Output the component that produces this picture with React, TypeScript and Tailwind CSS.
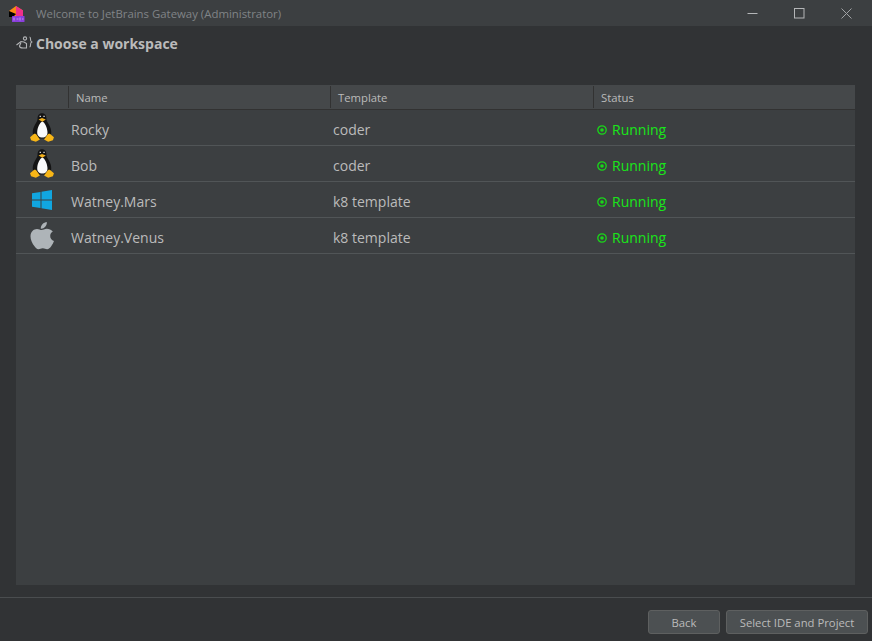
import React from "react";

function Tux() {
  return (
    <svg width="24" height="29" viewBox="60 25 70 85">
      <path d="M95 26c-9 0-13 7-13 15 0 8-4 12-8 19-4 7-7 16-6 25l7 15h40l7-15c1-9-2-18-6-25-4-7-8-11-8-19 0-8-4-15-13-15z" fill="#141414" />
      <path d="M96 50c-7 3-14 16-15 30-1 11 6 17 15 17s16-6 15-17c-1-14-8-27-15-30z" fill="#fafafa" />
      <path d="M85 44 95 40l11 4-10 7z" fill="#f5b21c" />
      <path d="M88 33h4v4h-4zM99 33h4v4h-4z" fill="#d8d8d8" />
      <path d="M60 96l12-10c4-1 6 1 8 4l9 13-12 6-14-4-3-9z" fill="#f8b617" />
      <path d="M130 96l-12-10c-4-1-6 1-8 4l-9 13 12 6 14-4 3-9z" fill="#f8b617" />
    </svg>
  );
}

function Windows() {
  return (
    <svg width="20" height="20" viewBox="1 1 20 20" fill="#11a6e0">
      <path d="M1 4.200 9.500 3v7.500H1zM10.500 2.800 21 1v9.500H10.500zM1 11.500h8.500V19L1 17.800zM10.500 11.500H21V21l-10.500-1.800z" />
    </svg>
  );
}

function Apple() {
  return (
    <svg width="24" height="28" viewBox="1 1 24 29" preserveAspectRatio="none" fill="#aeb4b8">
      <path d="M17.800 1c.2 2-.5 3.700-1.600 5-1.100 1.300-2.800 2.200-4.400 2-.2-1.800.6-3.600 1.600-4.700C14.600 2 16.400 1.100 17.800 1z" />
      <path d="M24 10.500c-1.800 1.200-2.800 2.800-2.800 4.900 0 2.500 1.400 4.300 3.800 5.200-.7 2-1.600 3.800-2.800 5.500-1.200 1.700-2.400 3-4.100 3-1.700 0-2.300-1-4.300-1s-2.700 1-4.300 1c-1.700 0-2.900-1.500-4.200-3.300C3.300 23.300 1.500 19.500 1.500 16c0-5 3.200-7.800 6.500-7.800 1.900 0 3.300 1.200 4.700 1.200 1.300 0 3-1.300 5.100-1.300 2.300 0 4.400 1 5.700 2.400z" />
    </svg>
  );
}

const rows = [
  { name: "Rocky", template: "coder", icon: <Tux /> },
  { name: "Bob", template: "coder", icon: <Tux /> },
  { name: "Watney.Mars", template: "k8 template", icon: <Windows /> },
  { name: "Watney.Venus", template: "k8 template", icon: <Apple /> },
];

export default function App() {
  return (
    <div className="w-[872px] h-[641px] flex flex-col bg-[#313335] font-['Open_Sans','Noto_Sans',sans-serif] overflow-hidden">
      {/* Title bar */}
      <div className="h-[26px] shrink-0 bg-[#3c3f41] flex items-center">
        <div className="w-[36px] pl-[9px] flex items-center">
          <svg width="16" height="17" viewBox="0 0 16 17">
            <path d="M0 6 7 1l7 4.500V12H0z" fill="#f98a12" />
            <path d="M7 1l7 4.500V12H7z" fill="#f0308c" />
            <path d="M0 6l7 3-3 3H0z" fill="#000" />
            <rect x="3" y="11" width="12.500" height="6" rx="0.500" fill="#8a3fdc" />
            <path d="M5 12.500v3M7.500 14h2M11 12.500v3M13 14h1.500" stroke="#d9c2f5" strokeWidth="0.700" />
          </svg>
        </div>
        <span className="flex-1 text-[11.4px] text-[#808487] pt-px">Welcome to JetBrains Gateway (Administrator)</span>
        <div className="flex items-center pr-[2px]">
          <button className="w-[47px] h-[26px] flex items-center justify-center">
            <svg width="11" height="11" viewBox="0 0 11 11"><path d="M0.500 5.500h10" stroke="#b4b6b8" /></svg>
          </button>
          <button className="w-[47px] h-[26px] flex items-center justify-center">
            <svg width="11" height="11" viewBox="0 0 11 11"><rect x="0.500" y="0.500" width="9.500" height="9.500" fill="none" stroke="#b4b6b8" /></svg>
          </button>
          <button className="w-[47px] h-[26px] flex items-center justify-center">
            <svg width="11" height="11" viewBox="0 0 11 11"><path d="M0.500 0.500l10 10M10.500 0.500l-10 10" stroke="#a0a2a4" /></svg>
          </button>
        </div>
      </div>

      {/* Heading */}
      <div className="h-[59px] shrink-0 pl-[16px] pt-[5px]">
        <div className="flex items-center h-[24px] gap-[3px]">
          <svg width="17" height="16" viewBox="0 0 17 16" fill="none" stroke="#b3b5b7" strokeWidth="1.100">
            <path d="M0.500 10 5 6.500l3 .5" />
            <path d="M5 7.500 3.500 11c0 1.500 1.500 2 3.500 2h3.500V8.500L8 7" />
            <circle cx="9" cy="3.500" r="1.600" />
            <path d="M13.500 2c1 0 1 .6 1 2 0 1.500.2 2.500 1.200 3-1 .5-1.200 1.500-1.200 3 0 1.400 0 2-1 2" />
          </svg>
          <span className="text-[14px] font-bold text-[#bbbbbb]">Choose a workspace</span>
        </div>
      </div>

      {/* Table */}
      <div className="ml-[16px] w-[839px] h-[500px] shrink-0 bg-[#3c3f41] flex flex-col">
        <div className="h-[25px] shrink-0 bg-[#45484a] border-b border-[#323232] flex items-stretch text-[11.3px] text-[#bbbbbb]">
          <div className="w-[52px]" />
          <div className="w-[262px] flex items-center pl-[7px] border-l border-[#323232] my-[1px] pt-[2px]">Name</div>
          <div className="w-[263px] flex items-center pl-[7px] border-l border-[#323232] my-[1px] pt-[2px]">Template</div>
          <div className="flex-1 flex items-center pl-[7px] border-l border-[#323232] my-[1px] pt-[2px]">Status</div>
        </div>
        {rows.map((r) => (
          <div key={r.name} className="h-[36px] shrink-0 flex items-center border-b border-[#515557] text-[14px] text-[#bbbbbb]">
            <div className="w-[55px] shrink-0 pr-[3px] flex justify-center">{r.icon}</div>
            <div className="w-[262px] shrink-0 pt-[4px]">{r.name}</div>
            <div className="w-[264px] shrink-0 pt-[4px]">{r.template}</div>
            <div className="flex items-center gap-[5px] text-[#19e619] pt-[4px]">
              <svg width="10" height="10" viewBox="0 0 10 10">
                <circle cx="5" cy="5" r="4.200" fill="none" stroke="#19d819" strokeWidth="1.300" />
                <circle cx="5" cy="5" r="1.800" fill="#19d819" />
              </svg>
              <span>Running</span>
            </div>
          </div>
        ))}
      </div>

      {/* Footer */}
      <div className="mt-[12px] flex-1 border-t border-[#4a4d4f] flex justify-end items-start pt-[12px] pr-[4px] gap-[6px]">
        <button className="w-[72px] h-[24px] rounded-[3px] bg-[#4c5052] border border-[#5e6060] text-[11.3px] text-[#bbbbbb] flex items-center justify-center pt-[2px]">Back</button>
        <button className="w-[142px] h-[24px] rounded-[3px] bg-[#4c5052] border border-[#5e6060] text-[11.3px] text-[#bbbbbb] flex items-center justify-center pt-[2px]">Select IDE and Project</button>
      </div>
    </div>
  );
}
